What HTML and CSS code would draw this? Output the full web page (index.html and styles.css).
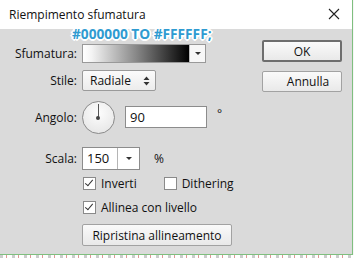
FILE: index.html
```html
<!DOCTYPE html>
<html lang="it">
<head>
    <meta charset="UTF-8">
    <title>Riempimento sfumatura</title>
    <link rel="stylesheet" href="styles.css">
</head>
<body>
    <div class="window">
        <div class="titlebar">
            <span class="title">Riempimento sfumatura</span>
            <svg class="close" width="12" height="12" viewBox="0 0 12 12">
                <path d="M1 1 L11 11 M11 1 L1 11" stroke="#222" stroke-width="1.1" fill="none"/>
            </svg>
        </div>

        <div class="content">
            <div class="form">
                <!-- sfumatura -->
                <div class="row r-grad">
                    <span class="lbl">Sfumatura:</span>
                    <div class="grad">
                        <div class="grad-fill"></div>
                        <div class="grad-drop"><span class="tri"></span></div>
                    </div>
                </div>

                <div class="row r-style">
                    <span class="lbl">Stile:</span>
                    <div class="select">
                        <span>Radiale</span>
                        <svg width="7" height="10" viewBox="0 0 7 10"><path d="M0.5 4 L3.5 0.5 L6.5 4 Z M0.5 6 L3.5 9.5 L6.5 6 Z" fill="#333"/></svg>
                    </div>
                </div>

                <div class="row r-angle">
                    <span class="lbl">Angolo:</span>
                    <div class="dial"><span class="hand"></span><span class="pin"></span></div>
                    <div class="field angle-field">90</div>
                    <span class="unit deg">°</span>
                </div>

                <div class="row r-scale">
                    <span class="lbl">Scala:</span>
                    <div class="combo">
                        <span class="combo-val">150</span>
                        <span class="combo-btn"><span class="tri"></span></span>
                    </div>
                    <span class="unit pct">%</span>
                </div>

                <div class="row r-check">
                    <span class="lbl"></span>
                    <span class="check on"></span><span class="ctext">Inverti</span>
                    <span class="check dith"></span><span class="ctext">Dithering</span>
                </div>

                <div class="row r-check r-align">
                    <span class="lbl"></span>
                    <span class="check on"></span><span class="ctext">Allinea con livello</span>
                </div>

                <div class="row r-reset">
                    <span class="lbl"></span>
                    <button class="btn reset">Ripristina allineamento</button>
                </div>
            </div>

            <div class="buttons">
                <button class="btn ok">OK</button>
                <button class="btn cancel">Annulla</button>
            </div>
        </div>

        <div class="note">#000000 TO #FFFFFF;</div>
    </div>
    <div class="strip"></div>
</body>
</html>
```

FILE: styles.css
```css
body {
    margin: 0;
    font-family: "Open Sans", "Noto Sans", Arial, sans-serif;
    font-size: 12px;
    color: #111;
    background-color: #f6f6f6;
}
.window {
    position: relative;
    width: 352px;
    height: 254px;
    background-color: #dadada;
    border-right: 1px solid #7fbf7f;
    border-bottom: 1px solid #7fbf7f;
}
.titlebar {
    height: 29px;
    background-color: #fff;
    display: flex;
    align-items: center;
    justify-content: space-between;
    padding: 0 9px;
}
.title {
    font-size: 12px;
    color: #111;
}
.close {
    margin-right: 3px;
    margin-top: -1px;
}
.content {
    display: flex;
}
.form {
    width: 262px;
    padding-top: 15px;
}
.row {
    display: flex;
    align-items: center;
}
.lbl {
    width: 77px;
    margin-right: 5px;
    text-align: right;
    flex: none;
}
.r-grad {
    height: 19px;
}
.grad {
    width: 122px;
    height: 17px;
    border: 1px solid #999;
    display: flex;
    background-color: #fafafa;
}
.grad-fill {
    flex: 1;
    background: linear-gradient(to right, #fff 0%, #f4f4f4 8%, #888 50%, #000 100%);
}
.grad-drop {
    width: 15px;
    border-left: 1px solid #bbb;
    display: flex;
    align-items: center;
    justify-content: center;
    background-color: #f7f7f7;
}
.tri {
    width: 0;
    height: 0;
    border-left: 3px solid transparent;
    border-right: 3px solid transparent;
    border-top: 3px solid #333;
}
.r-style {
    margin-top: 7px;
    height: 21px;
}
.select {
    border: 1px solid #9a9a9a;
    border-radius: 2px;
    background: linear-gradient(#fbfbfb, #ececec);
    display: flex;
    align-items: center;
    justify-content: space-between;
    padding: 0 5px 0 7px;
    box-sizing: border-box;
    width: 74px;
    height: 21px;
}
.r-angle {
    margin-top: 9px;
    height: 34px;
}
.dial {
    position: relative;
    width: 33px;
    height: 33px;
    border: 1px solid #8a8a8a;
    border-radius: 50%;
    background: radial-gradient(circle at 50% 35%, #fdfdfd, #e2e2e2);
    box-sizing: border-box;
}
.hand {
    position: absolute;
    left: 15px;
    top: 2px;
    width: 1px;
    height: 14px;
    background-color: #555;
}
.pin {
    position: absolute;
    left: 13px;
    top: 14px;
    width: 4px;
    height: 4px;
    border-radius: 50%;
    background-color: #444;
}
.field {
    background-color: #fff;
    border: 1px solid #8c8c8c;
    box-sizing: border-box;
    height: 22px;
    line-height: 20px;
    padding-left: 4px;
}
.angle-field {
    width: 82px;
    margin-left: 10px;
    font-size: 13px;
}
.unit.deg {
    margin-left: 10px;
    margin-top: -8px;
}
.r-scale {
    margin-top: 13px;
    height: 23px;
}
.combo {
    display: flex;
    height: 23px;
    border: 1px solid #8c8c8c;
    box-sizing: border-box;
    background-color: #fff;
}
.combo-val {
    width: 34px;
    padding-left: 4px;
    line-height: 21px;
    font-size: 13px;
    box-sizing: border-box;
}
.combo-btn {
    width: 21px;
    border-left: 1px solid #b5b5b5;
    display: flex;
    align-items: center;
    justify-content: center;
}
.unit.pct {
    margin-left: 14px;
}
.r-check {
    margin-top: 6px;
    height: 14px;
}
.r-align {
    margin-top: 10px;
}
.check {
    width: 13px;
    height: 13px;
    border: 1px solid #8a8a8a;
    background-color: #fff;
    box-sizing: border-box;
    margin-left: 1px;
    position: relative;
}
.check.on::after {
    content: "";
    position: absolute;
    left: 3px;
    top: 0px;
    width: 3px;
    height: 7px;
    border-right: 1.5px solid #333;
    border-bottom: 1.5px solid #333;
    transform: rotate(40deg);
}
.check.dith {
    margin-left: 27px;
}
.ctext {
    margin-left: 5px;
}
.r-reset {
    margin-top: 10px;
}
.btn {
    font-family: inherit;
    font-size: 12px;
    color: #111;
    background: linear-gradient(#fafafa, #e9e9e9);
    border: 1px solid #a2a2a2;
    border-radius: 2px;
    padding: 0;
    height: 21px;
}
.reset {
    width: 150px;
    height: 22px;
}
.buttons {
    display: flex;
    flex-direction: column;
    padding-top: 11px;
}
.buttons .btn {
    width: 80px;
}
.ok {
    height: 22px;
    border: 2px solid #6e6e6e;
    margin-bottom: 9px;
}
.cancel {
    padding-left: 12px;
}
.note {
    position: absolute;
    left: 72px;
    top: 24px;
    font-family: "Open Sans", Arial, sans-serif;
    font-weight: bold;
    font-size: 13.7px;
    color: #2f9bd1;
    text-shadow: 1px 0 #fff, -1px 0 #fff, 0 1px #fff, 0 -1px #fff, 1px 1px #fff, -1px -1px #fff, 1px -1px #fff, -1px 1px #fff, 2px 0 #fff, -2px 0 #fff, 0 2px #fff, 0 -2px #fff;
}
.strip {
    height: 3px;
    background: repeating-linear-gradient(to right, #ccc 0 3px, #fff 3px 6px, #d99 6px 7px, #fff 7px 12px);
}
```
